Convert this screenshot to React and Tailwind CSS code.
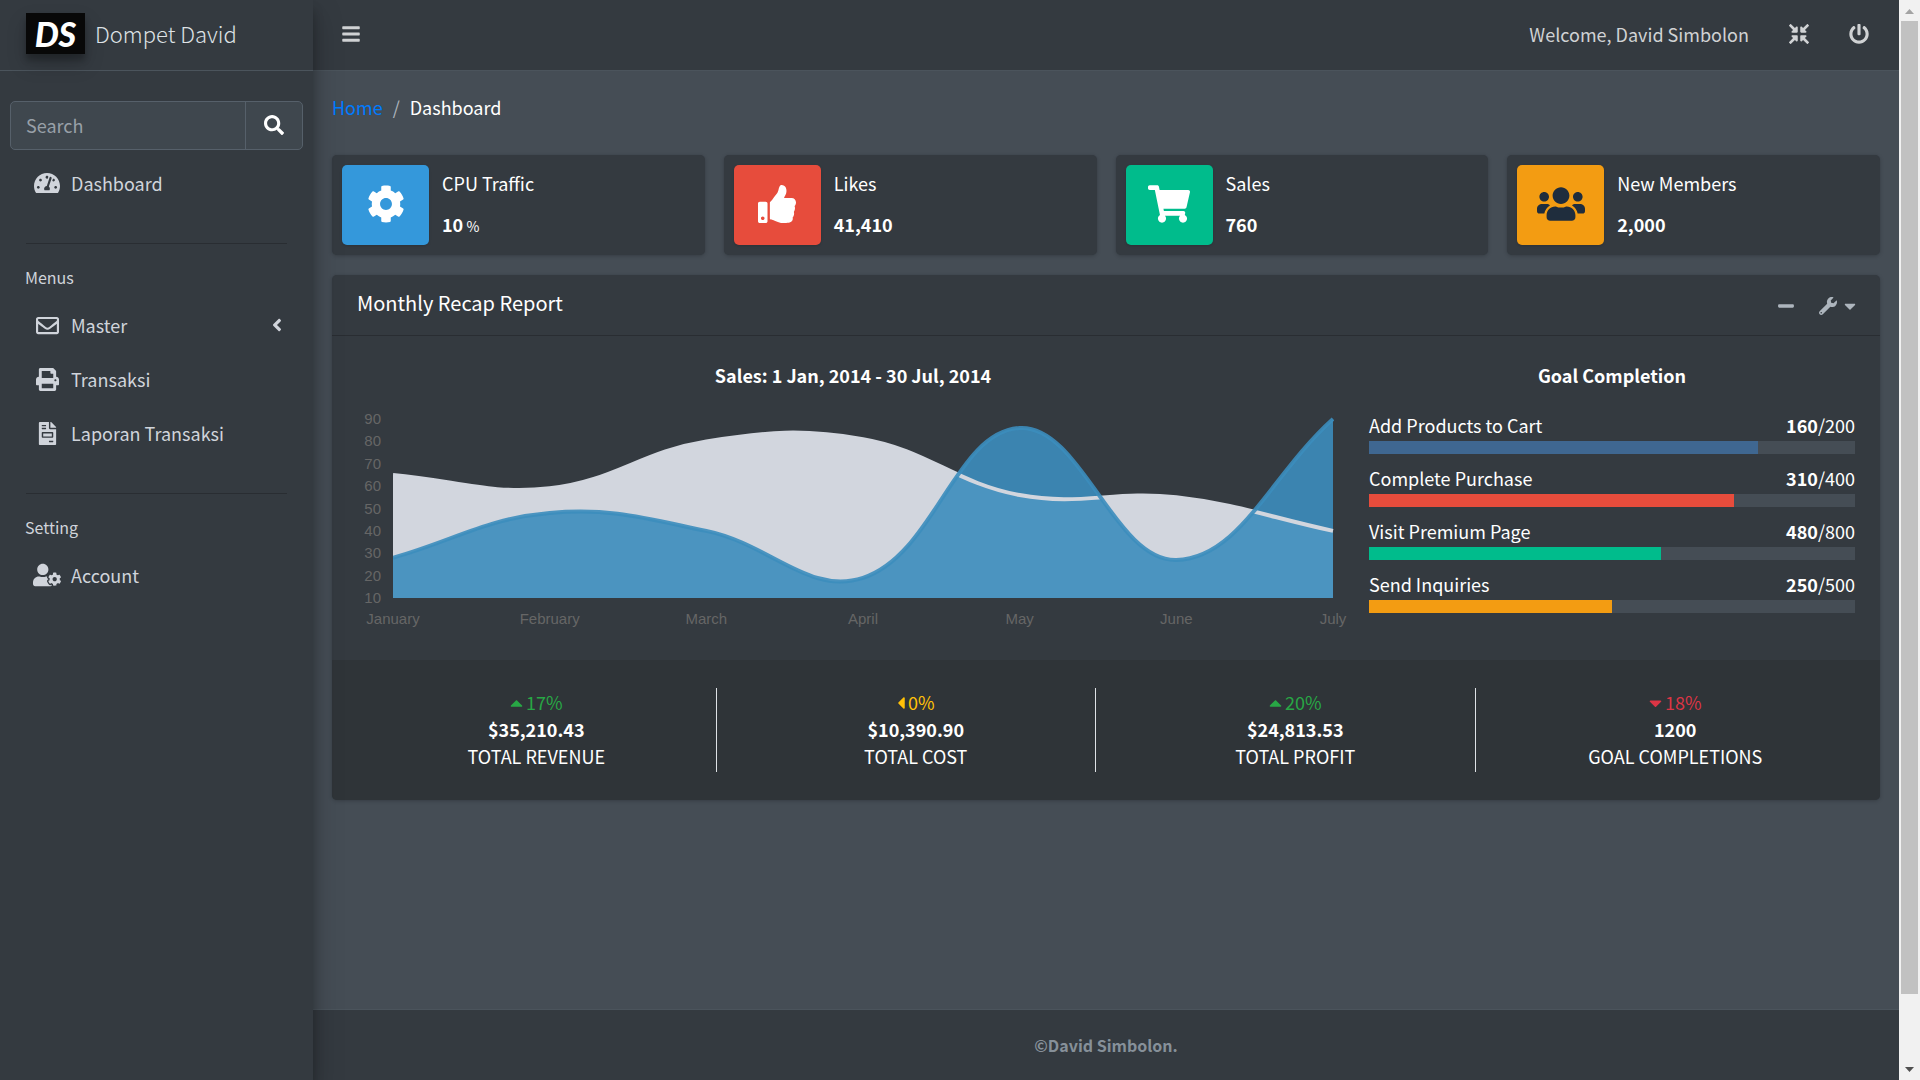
import React from "react";
import {
  FaTachometerAlt, FaRegEnvelope, FaPrint, FaFileInvoice, FaUserCog, FaAngleLeft, FaSearch, FaBars,
  FaCompressArrowsAlt, FaPowerOff, FaCog, FaThumbsUp, FaShoppingCart, FaUsers, FaMinus, FaWrench,
  FaCaretUp, FaCaretLeft, FaCaretDown,
} from "react-icons/fa";

const months = ["January", "February", "March", "April", "May", "June", "July"];
const goods = [28, 48, 40, 19, 86, 27, 90];
const electronics = [65, 59, 80, 81, 56, 55, 40];
const plot = { left: 36, right: 976, top: 13, bottom: 192 };

const xAt = (i) => plot.left + ((plot.right - plot.left) * i) / 6;
const yAt = (v) => plot.bottom - ((plot.bottom - plot.top) * (v - 10)) / 80;
const clampY = (y) => Math.max(plot.top, Math.min(plot.bottom, y));

// Smooth cubic spline through the points, tension 0.4
function spline(values) {
  const p = values.map((v, i) => ({ x: xAt(i), y: yAt(v) }));
  const handles = p.map((c, i) => {
    const a = p[i - 1] || c;
    const b = p[i + 1] || c;
    const d1 = Math.hypot(c.x - a.x, c.y - a.y);
    const d2 = Math.hypot(b.x - c.x, b.y - c.y);
    const fa = (0.4 * d1) / (d1 + d2);
    const fb = (0.4 * d2) / (d1 + d2);
    return {
      px: c.x - fa * (b.x - a.x), py: clampY(c.y - fa * (b.y - a.y)),
      nx: c.x + fb * (b.x - a.x), ny: clampY(c.y + fb * (b.y - a.y)),
    };
  });
  let d = `M${p[0].x} ${p[0].y}`;
  for (let i = 1; i < p.length; i++) {
    d += ` C${handles[i - 1].nx} ${handles[i - 1].ny} ${handles[i].px} ${handles[i].py} ${p[i].x} ${p[i].y}`;
  }
  return d;
}

function SalesChart() {
  const close = ` L${plot.right} ${plot.bottom} L${plot.left} ${plot.bottom} Z`;
  const a = spline(electronics);
  const b = spline(goods);
  return (
    <svg viewBox="0 0 992 230" className="block w-full" role="img" aria-label="Monthly sales">
      <clipPath id="plot">
        <rect x={plot.left} y={plot.top - 2} width={plot.right - plot.left + 1} height={plot.bottom - plot.top + 3} />
      </clipPath>
      <g clipPath="url(#plot)">
        <path d={a + close} fill="#d2d6de" />
        <path d={b + close} fill="#3c8dbc" fillOpacity="0.9" />
        <path d={a} fill="none" stroke="#d2d6de" strokeWidth="4" />
        <path d={b} fill="none" stroke="#3c8dbc" strokeOpacity="0.9" strokeWidth="4" />
      </g>
      <g fill="#666666" fontSize="15" fontFamily="'Liberation Sans', Arial, sans-serif">
        {[90, 80, 70, 60, 50, 40, 30, 20, 10].map((v) => (
          <text key={v} x="24" y={yAt(v) + 5} textAnchor="end">{v}</text>
        ))}
        {months.map((m, i) => (
          <text key={m} x={xAt(i)} y="218" textAnchor="middle">{m}</text>
        ))}
      </g>
    </svg>
  );
}

function NavItem({ icon: Icon, label, size, arrow }) {
  return (
    <li>
      <a href="#" className="flex h-[50px] items-center pr-4 pl-[21px] text-[#d0d4db]">
        <span className="flex w-8 justify-center"><Icon className={size} /></span>
        <span className="ml-2 flex-1">{label}</span>
        {arrow && <FaAngleLeft className="size-5" />}
      </a>
    </li>
  );
}

function NavHeading({ children }) {
  return <h2 className="px-[15px] pt-[19px] pb-[9px] text-base leading-7 text-[#d0d4db]">{children}</h2>;
}

function Divider() {
  return <hr className="mx-4 border-[#292d32]" />;
}

const stats = [
  { label: "CPU Traffic", value: "10", unit: "%", icon: FaCog, tile: "bg-[#3498db] text-white", size: "size-[38px]" },
  { label: "Likes", value: "41,410", icon: FaThumbsUp, tile: "bg-[#e74c3c] text-white", size: "size-[38px]" },
  { label: "Sales", value: "760", icon: FaShoppingCart, tile: "bg-[#00bc8c] text-white", size: "size-[42px]" },
  { label: "New Members", value: "2,000", icon: FaUsers, tile: "bg-[#f39c12] text-[#1f2d3d]", size: "size-12" },
];

const goals = [
  { label: "Add Products to Cart", done: 160, total: 200, pct: 80, color: "bg-[#3f6791]" },
  { label: "Complete Purchase", done: 310, total: 400, pct: 75, color: "bg-[#e74c3c]" },
  { label: "Visit Premium Page", done: 480, total: 800, pct: 60, color: "bg-[#00bc8c]" },
  { label: "Send Inquiries", done: 250, total: 500, pct: 50, color: "bg-[#f39c12]" },
];

const totals = [
  { pct: "17%", value: "$35,210.43", label: "TOTAL REVENUE", icon: FaCaretUp, color: "text-[#28a745]", size: "w-[13px]" },
  { pct: "0%", value: "$10,390.90", label: "TOTAL COST", icon: FaCaretLeft, color: "text-[#ffc107]", size: "w-2" },
  { pct: "20%", value: "$24,813.53", label: "TOTAL PROFIT", icon: FaCaretUp, color: "text-[#28a745]", size: "w-[13px]" },
  { pct: "18%", value: "1200", label: "GOAL COMPLETIONS", icon: FaCaretDown, color: "text-[#dc3545]", size: "w-[13px]" },
];

function Sidebar() {
  return (
    <aside className="z-10 flex w-[313px] shrink-0 flex-col bg-[#343a40] shadow-[0_14px_28px_rgba(0,0,0,0.25),0_10px_10px_rgba(0,0,0,0.22)]">
      <a href="#" className="flex h-[71px] items-center border-b border-[#4b545c] px-[26px] pb-[3px] text-[22px] text-[#dee2e6]">
        <span className="flex h-[41px] w-[59px] items-center justify-center bg-[#080808] font-['Lato',sans-serif] text-[34px] leading-none font-black text-white italic shadow-[0_10px_20px_rgba(0,0,0,0.19),0_6px_6px_rgba(0,0,0,0.23)]">
          DS
        </span>
        <span className="ml-[10px] pb-[2px] font-['Noto_Sans_CJK_SC_Light','Noto_Sans_CJK_SC',sans-serif] font-light">Dompet David</span>
      </a>
      <div className="px-[10px] pt-[30px]">
        <form className="flex h-[49px] rounded-[5px] border border-[#56606a] bg-[#3f474e]">
          <input type="search" aria-label="Search" placeholder="Search" className="min-w-0 flex-1 px-[15px] pb-[2px] text-white outline-none placeholder:text-[#98a0a8]" />
          <button type="button" aria-label="Submit search" className="flex w-[57px] items-center justify-center border-l border-[#56606a] pb-[2px] text-white">
            <FaSearch className="size-5" />
          </button>
        </form>
        <nav>
          <ul className="pt-2 pb-[35px]">
            <NavItem icon={FaTachometerAlt} label="Dashboard" size="size-[26px]" />
          </ul>
          <Divider />
          <NavHeading>Menus</NavHeading>
          <ul className="flex flex-col gap-1 pb-[35px]">
            <NavItem icon={FaRegEnvelope} label="Master" size="size-[23px]" arrow />
            <NavItem icon={FaPrint} label="Transaksi" size="size-[23px]" />
            <NavItem icon={FaFileInvoice} label="Laporan Transaksi" size="size-[23px]" />
          </ul>
          <Divider />
          <NavHeading>Setting</NavHeading>
          <ul>
            <NavItem icon={FaUserCog} label="Account" size="size-7" />
          </ul>
        </nav>
      </div>
    </aside>
  );
}

function Report() {
  return (
    <section className="mt-5 rounded-[5px] bg-[#343a40] shadow-[0_0_1px_rgba(0,0,0,0.13),0_1px_4px_rgba(0,0,0,0.2)]">
      <header className="flex h-[61px] items-center justify-between border-b border-[#292d32] pr-[21px] pl-[25px]">
        <h2 className="pb-1 text-xl">Monthly Recap Report</h2>
        <div className="flex items-center gap-6 pt-px text-[#adb5bd]">
          <button type="button" aria-label="Collapse"><FaMinus className="size-[18px]" /></button>
          <button type="button" aria-label="Tools" className="flex items-center gap-1">
            <FaWrench className="size-[18px]" />
            <FaCaretDown className="size-[18px]" />
          </button>
        </div>
      </header>
      <div className="grid grid-cols-[2fr_1fr] px-[15px] pt-[25px] pb-6">
        <div className="px-[10px]">
          <h3 className="mb-[17px] text-center leading-7 font-bold">Sales: 1 Jan, 2014 - 30 Jul, 2014</h3>
          <SalesChart />
        </div>
        <div className="px-[10px]">
          <h3 className="mb-5 text-center leading-7 font-bold">Goal Completion</h3>
          <ul className="flex flex-col gap-[10px] pt-[2px]">
            {goals.map((g) => (
              <li key={g.label}>
                <div className="mb-[2px] flex justify-between leading-7">
                  <span>{g.label}</span>
                  <span><b>{g.done}</b>/{g.total}</span>
                </div>
                <div className="h-[13px] bg-[#454d55]">
                  <div className={`h-full ${g.color}`} style={{ width: `${g.pct}%` }} />
                </div>
              </li>
            ))}
          </ul>
        </div>
      </div>
      <footer className="grid grid-cols-4 rounded-b-[5px] bg-[#2f3438] px-[15px] py-7">
        {totals.map(({ icon: Icon, ...t }, i) => (
          <div key={t.label} className="px-[10px]">
            <div className={`flex flex-col items-center pt-px pb-[2px] leading-[27px] ${i < 3 ? "border-r border-[#dee2e6]" : ""}`}>
              <span className={`flex items-center gap-[3px] ${t.color}`}><Icon className={`h-5 ${t.size}`} />{t.pct}</span>
              <b>{t.value}</b>
              <span>{t.label}</span>
            </div>
          </div>
        ))}
      </footer>
    </section>
  );
}

export default function App() {
  return (
    <div className="flex min-h-screen bg-[#454d55] font-['Noto_Sans_CJK_SC','Noto_Sans',sans-serif] text-lg leading-[30px] text-white">
      <Sidebar />
      <div className="flex min-w-0 flex-1 flex-col">
        <header className="flex h-[71px] items-center border-b border-[#4b545c] bg-[#343a40] pr-[30px] pb-[2px] pl-7 text-[#d0d2d4]">
          <button type="button" aria-label="Toggle menu"><FaBars className="size-5" /></button>
          <span className="ml-auto">Welcome, David Simbolon</span>
          <button type="button" aria-label="Exit full screen" className="ml-10"><FaCompressArrowsAlt className="size-5" /></button>
          <button type="button" aria-label="Sign out" className="ml-10"><FaPowerOff className="size-5" /></button>
        </header>
        <main className="flex-1 px-[19px] pt-[21px]">
          <nav aria-label="Breadcrumb" className="flex gap-[10px]">
            <a href="#" className="text-[#007bff]">Home</a>
            <span className="text-[#adb5bd]">/</span>
            <span>Dashboard</span>
          </nav>
          <div className="mt-[33px] grid grid-cols-4 gap-[19px]">
            {stats.map(({ icon: Icon, ...s }) => (
              <article key={s.label} className="flex rounded-[5px] bg-[#343a40] p-[10px] shadow-[0_0_1px_rgba(0,0,0,0.13),0_1px_4px_rgba(0,0,0,0.2)]">
                <div className={`flex h-20 w-[87px] items-center justify-center rounded-[5px] pb-[2px] shadow-sm ${s.tile}`}>
                  <Icon className={s.size} />
                </div>
                <div className="flex flex-col justify-between pt-[3px] pb-[6px] pl-[13px]">
                  <span>{s.label}</span>
                  <span className="font-bold">{s.value}{s.unit && <span className="text-sm font-normal"> {s.unit}</span>}</span>
                </div>
              </article>
            ))}
          </div>
          <Report />
        </main>
        <footer className="flex h-[71px] items-center justify-center border-t border-[#4b545c] bg-[#343a40] text-base font-bold text-[#869099]">
          ©David Simbolon.
        </footer>
      </div>
      <div aria-hidden="true" className="flex w-[21px] shrink-0 flex-col items-center bg-[#f1f1f1]">
        <svg viewBox="0 0 21 21" className="size-[21px]"><path d="M6 14 L10.500 9 L15 14Z" fill="#a3a3a3" /></svg>
        <div className="w-[17px] grow-[15] bg-[#c1c1c1]" />
        <div className="grow" />
        <svg viewBox="0 0 21 21" className="size-[21px]"><path d="M6 8 L10.500 13 L15 8Z" fill="#505050" /></svg>
      </div>
    </div>
  );
}
